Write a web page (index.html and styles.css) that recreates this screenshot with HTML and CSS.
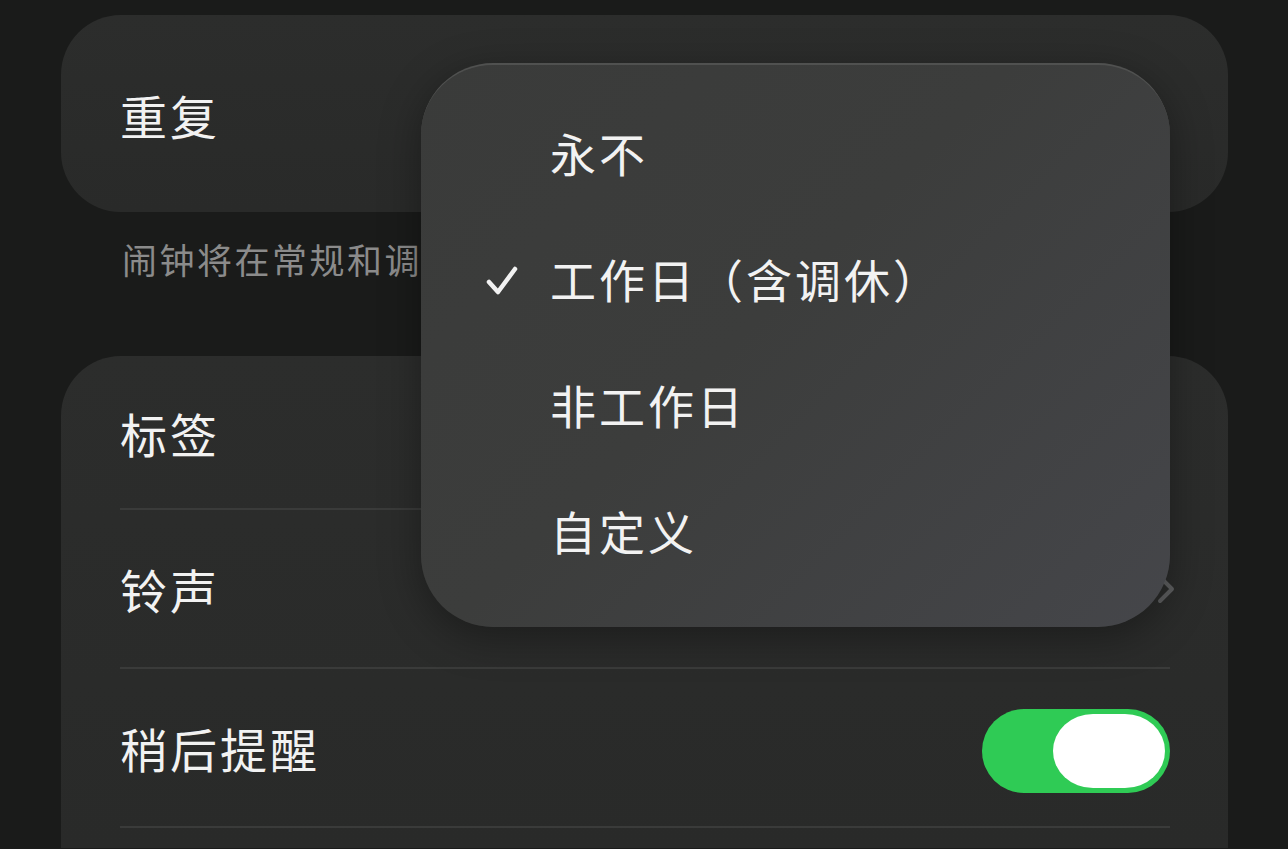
FILE: index.html
```html
<!DOCTYPE html>
<html lang="zh-CN">
<head>
<meta charset="utf-8">
<title>重复</title>
<link rel="stylesheet" href="styles.css">
</head>
<body>
<div class="screen">
  <div class="card card-repeat">
    <div class="row row-single"><span class="label">重复</span></div>
  </div>
  <p class="caption">闹钟将在常规和调休工作日响起</p>
  <div class="card card-list">
    <div class="row"><span class="label">标签</span></div>
    <div class="row"><span class="label">铃声</span><span class="chev"><svg width="20" height="32" viewBox="0 0 20 32"><polyline points="4,4 16,16 4,28" fill="none" stroke="#5e5f60" stroke-width="4" stroke-linecap="round" stroke-linejoin="round"/></svg></span></div>
    <div class="row"><span class="label">稍后提醒</span><span class="toggle"><span class="knob"></span></span></div>
  </div>

  <div class="menu">
    <div class="item"><span class="check"></span><span class="text">永不</span></div>
    <div class="item"><span class="check"><svg width="32" height="30" viewBox="0 0 32 30"><polyline points="3,16 12,26 29,3" fill="none" stroke="#f2f2f2" stroke-width="4.5" stroke-linecap="round" stroke-linejoin="round"/></svg></span><span class="text">工作日（含调休）</span></div>
    <div class="item"><span class="check"></span><span class="text">非工作日</span></div>
    <div class="item"><span class="check"></span><span class="text">自定义</span></div>
  </div>
</div>
</body>
</html>
```

FILE: styles.css
```css
html, body {
  margin: 0;
  padding: 0;
  background: #1a1b1a;
  overflow: hidden;
}
body {
  width: 1288px;
  height: 849px;
  font-family: "Noto Sans CJK SC", "Noto Sans", sans-serif;
  color: #f2f2f2;
}
.screen {
  position: relative;
  height: 849px;
  box-sizing: border-box;
  padding: 15px 60px 0 61px;
  overflow: hidden;
}
.card {
  background: linear-gradient(180deg, #2c2d2c 0%, #292a29 100%);
  border-radius: 60px;
}
.card-repeat {
  height: 197px;
  display: flex;
  align-items: center;
}
.row {
  height: 157px;
  margin: 0 58px 0 59px;
  border-bottom: 2px solid #3a3b3a;
  display: flex;
  align-items: center;
  justify-content: space-between;
}
.row-single {
  border-bottom: none;
  flex: 1;
  height: auto;
  padding-top: 2px;
}
.label {
  font-size: 47px;
  line-height: 1;
  letter-spacing: 3px;
  color: #f2f2f2;
}
.caption {
  margin: 22px 0 0 61px;
  width: 300px;
  height: 50px;
  overflow: hidden;
  font-size: 35px;
  line-height: 50px;
  color: #8b8b8b;
  letter-spacing: 2.5px;
  white-space: nowrap;
}
.card-list {
  margin-top: 72px;
  height: 492px;
  border-radius: 60px 60px 0 0;
}
.card-list .row:first-child {
  height: 152px;
}
.chev {
  display: flex;
  margin-right: -6px;
}
.toggle {
  width: 188px;
  height: 84px;
  border-radius: 42px;
  background: #2fcb55;
  display: flex;
  align-items: center;
  justify-content: flex-end;
  padding: 0 5px;
  box-sizing: border-box;
  margin-top: 6px;
}
.knob {
  width: 112px;
  height: 74px;
  border-radius: 40px / 37px;
  background: #ffffff;
}
.menu {
  position: absolute;
  left: 421px;
  top: 63px;
  width: 749px;
  height: 564px;
  box-sizing: border-box;
  border-radius: 72px;
  background: linear-gradient(135deg, #3a3b3a 0%, #3c3d3c 45%, #45464a 100%);
  border-top: 2px solid #505150;
  box-shadow: 0 10px 40px rgba(0,0,0,0.35);
  padding-top: 64px;
}
.item {
  height: 126px;
  display: flex;
  align-items: flex-start;
}
.check {
  width: 64px;
  margin-left: 65px;
  display: flex;
  padding-top: 11px;
}
.text {
  font-size: 46px;
  line-height: 1;
  letter-spacing: 3px;
  color: #f2f2f2;
}
```
